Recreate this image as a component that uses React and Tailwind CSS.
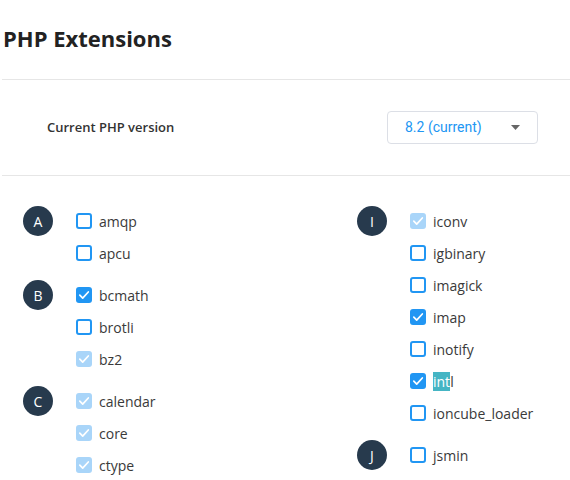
import React from "react";

const groupsLeft = [
  {
    letter: "A",
    items: [
      { name: "amqp", state: "off" },
      { name: "apcu", state: "off" },
    ],
  },
  {
    letter: "B",
    items: [
      { name: "bcmath", state: "on" },
      { name: "brotli", state: "off" },
      { name: "bz2", state: "locked" },
    ],
  },
  {
    letter: "C",
    items: [
      { name: "calendar", state: "locked" },
      { name: "core", state: "locked" },
      { name: "ctype", state: "locked" },
    ],
  },
];

const groupsRight = [
  {
    letter: "I",
    items: [
      { name: "iconv", state: "locked" },
      { name: "igbinary", state: "off" },
      { name: "imagick", state: "off" },
      { name: "imap", state: "on" },
      { name: "inotify", state: "off" },
      { name: "intl", state: "on", selected: true },
      { name: "ioncube_loader", state: "off" },
    ],
  },
  {
    letter: "J",
    items: [{ name: "jsmin", state: "off" }],
  },
];

const Check = () => (
  <svg width="12" height="12" viewBox="0 0 12 12" fill="none">
    <path
      d="M1.8 6.2L4.7 9.1L10.3 3"
      stroke="white"
      strokeWidth="1.7"
      strokeLinecap="round"
      strokeLinejoin="round"
    />
  </svg>
);

const Checkbox = ({ state }) => {
  if (state === "off") {
    return (
      <span className="w-4 h-4 rounded-[3px] border-2 border-[#2196f3] bg-white shrink-0" />
    );
  }
  return (
    <span
      className={
        state === "on"
          ? "w-4 h-4 rounded-[3px] bg-[#2196f3] flex items-center justify-center shrink-0"
          : "w-4 h-4 rounded-[3px] bg-[#a9d5f9] flex items-center justify-center shrink-0"
      }
    >
      <Check />
    </span>
  );
};

const Group = ({ group }) => (
  <div className="flex items-start mb-[10px]">
    <div className="w-[30px] h-[30px] mt-px rounded-full bg-[#273a4d] text-white text-[14px] flex items-center justify-center shrink-0">
      {group.letter}
    </div>
    <div className="ml-[23px] flex flex-col">
      {group.items.map((item) => (
        <label key={item.name} className="h-8 flex items-center gap-[7px]">
          <Checkbox state={item.state} />
          <span className="text-[14px] text-[#3a3a3a]">
            {item.selected ? (
              <>
                <span className="bg-[#45b5c4] text-white">int</span>l
              </>
            ) : (
              item.name
            )}
          </span>
        </label>
      ))}
    </div>
  </div>
);

export default function App() {
  return (
    <div className="w-[570px] h-[480px] bg-white overflow-hidden font-['Open_Sans',sans-serif]">
      <div className="h-[79px] pl-[3px] pt-[23px]">
        <h1 className="text-[22px] leading-[30px] font-bold text-[#222]">PHP Extensions</h1>
      </div>
      <div className="ml-[2px] border-t border-[#e6e6e6]" />

      <div className="h-[95px] flex items-center justify-between pl-[47px] pr-[32px]">
        <span className="text-[13px] font-semibold text-[#333]">Current PHP version</span>
        <button className="w-[151px] h-[33px] border border-[#dcdfe6] rounded-[4px] flex items-center justify-between pl-[17px] pr-[17px] font-['Roboto',sans-serif] text-[14px] text-[#2196f3]">
          <span>8.2 (current)</span>
          <svg width="9" height="5" viewBox="0 0 9 5">
            <path d="M0 0H9L4.5 5Z" fill="#666" />
          </svg>
        </button>
      </div>
      <div className="ml-[2px] border-t border-[#e6e6e6]" />

      <div className="grid grid-cols-[334px_1fr] pl-[23px] pt-[29px]">
        <div>
          {groupsLeft.map((g) => (
            <Group key={g.letter} group={g} />
          ))}
        </div>
        <div>
          {groupsRight.map((g) => (
            <Group key={g.letter} group={g} />
          ))}
        </div>
      </div>
    </div>
  );
}
